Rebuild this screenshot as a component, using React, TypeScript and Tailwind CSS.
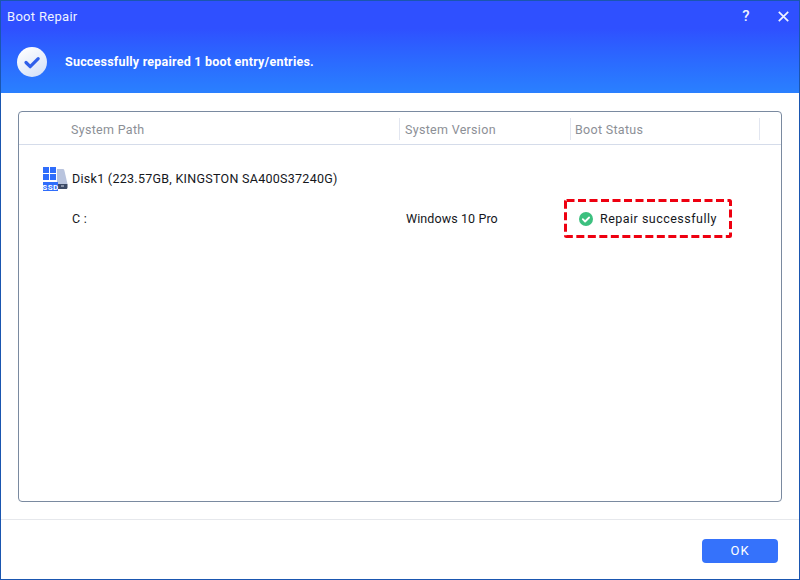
import React from 'react';

const CheckBadge = () => (
  <svg width="30" height="30" viewBox="0 0 30 30" className="shrink-0">
    <defs>
      <linearGradient id="badge" x1="0.2" y1="0" x2="0.8" y2="1">
        <stop offset="0" stopColor="#ffffff" />
        <stop offset="1" stopColor="#d3e0f8" />
      </linearGradient>
    </defs>
    <circle cx="15" cy="15" r="15" fill="url(#badge)" />
    <path d="M9 15.500l4.200 4.200 8-8" fill="none" stroke="#2f5fea" strokeWidth="3.200" strokeLinecap="round" strokeLinejoin="round" />
  </svg>
);

const SsdIcon = () => (
  <svg width="25" height="24" viewBox="0 0 25 24" className="shrink-0">
    <path d="M14 2h5.500c1 0 1.600.5 1.900 1.400L24.500 17H14z" fill="#b9c4de" />
    <path d="M14 17h10.500v3.500c0 .8-.5 1.500-1.500 1.500H14z" fill="#3c4a66" />
    <rect x="18" y="18.500" width="3" height="1" fill="#d5dcec" />
    <rect x="0" y="0" width="6" height="6" fill="#2f6dfb" />
    <rect x="7" y="0" width="6" height="6" fill="#2f6dfb" />
    <rect x="0" y="7" width="6" height="6" fill="#2f6dfb" />
    <rect x="7" y="7" width="6" height="6" fill="#2f6dfb" />
    <rect x="0" y="15" width="15" height="9" fill="#2f6dfb" />
    <text x="7.500" y="22.500" textAnchor="middle" fontSize="8" fontWeight="700" fill="#ffffff" fontFamily="Roboto, sans-serif" letterSpacing="0.500">SSD</text>
  </svg>
);

const GreenCheck = () => (
  <svg width="14" height="14" viewBox="0 0 14 14" className="shrink-0">
    <circle cx="7" cy="7" r="7" fill="#3cc07f" />
    <path d="M3.800 7.200l2.300 2.300 4-4" fill="none" stroke="#ffffff" strokeWidth="1.800" strokeLinecap="round" strokeLinejoin="round" />
  </svg>
);

const App: React.FC = () => {
  return (
    <div className="w-[800px] h-[580px] flex flex-col bg-white border border-[#1a56b0] font-['Roboto',sans-serif] overflow-hidden">
      <div className="h-[92px] shrink-0 bg-gradient-to-b from-[#2f50ff] from-30% to-[#2a80ff] text-white">
        <div className="h-[31px] flex items-center pl-[6px] pr-[10px] text-[13px] tracking-[0.3px] text-[#eef2ff]">
          <span className="flex-1">Boot Repair</span>
          <span className="w-[16px] mr-[24px] text-center text-[15px] font-medium">?</span>
          <svg width="11" height="11" viewBox="0 0 11 11">
            <path d="M.8.8l9.400 9.400M10.200.8L.8 10.200" stroke="#eef2ff" strokeWidth="1.700" fill="none" />
          </svg>
        </div>
        <div className="flex items-center pl-[16px] pt-[15px] gap-[18px]">
          <CheckBadge />
          <span className="pt-[1px] text-[12.500px] font-bold tracking-[0.22px]">Successfully repaired 1 boot entry/entries.</span>
        </div>
      </div>

      <div className="flex-1 pt-[18px] pb-[17px] px-[17px] flex">
        <div className="flex-1 border border-[#7a8aa0] rounded-[4px] flex flex-col">
          <div className="h-[33px] border-b border-[#d5dcea] flex items-start pt-[6px] text-[12.500px] tracking-[0.3px] text-[#8c8f96]">
            <div className="w-[381px] h-[22px] pl-[52px] pt-[3px] flex items-center border-r border-[#e2e6f0]">System Path</div>
            <div className="w-[171px] h-[22px] pl-[5px] pt-[3px] flex items-center border-r border-[#e2e6f0]">System Version</div>
            <div className="w-[189px] h-[22px] pl-[4px] pt-[3px] flex items-center border-r border-[#e2e6f0]">Boot Status</div>
          </div>
          <div className="flex items-center gap-[4px] pl-[24px] pt-[22px] text-[12.500px] tracking-[0.28px] text-[#15171c]">
            <SsdIcon />
            <span>Disk1 (223.57GB, KINGSTON SA400S37240G)</span>
          </div>
          <div className="flex items-center mt-[8px] text-[12.500px] text-[#15171c]">
            <div className="w-[387px] pl-[53px] pt-[1px] tracking-[0.25px]">C :</div>
            <div className="w-[158px] pt-[1px] tracking-[0.1px]">Windows 10 Pro</div>
            <div className="relative w-[168px] h-[39px] flex items-center gap-[7px] pl-[15px] pt-[1px] tracking-[0.48px]">
              <GreenCheck />
              <span>Repair successfully</span>
              <svg width="168" height="39" viewBox="0 0 168 39" className="absolute left-0 top-0">
                <rect x="1.500" y="1.500" width="165" height="36" rx="1" fill="none" stroke="#ee0010" strokeWidth="3" strokeDasharray="8 3.500" />
              </svg>
            </div>
          </div>
        </div>
      </div>

      <div className="h-[60px] shrink-0 border-t border-[#e6e8ec] flex justify-end pt-[19px] pr-[21px]">
        <button className="w-[76px] h-[24px] rounded-[4px] bg-[#3572fb] text-white text-[13px] tracking-[1px]">OK</button>
      </div>
    </div>
  );
};

export default App;
